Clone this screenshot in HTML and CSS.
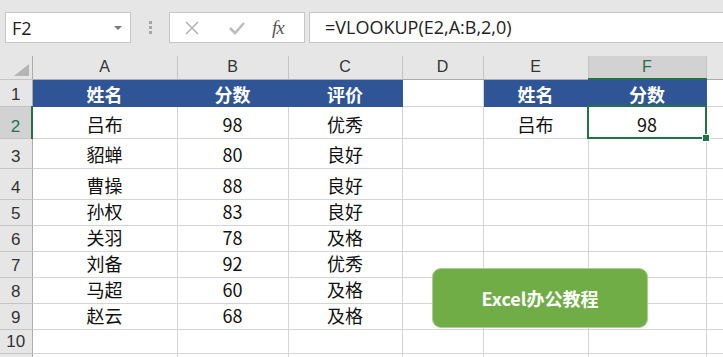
FILE: index.html
```html
<!DOCTYPE html>
<html lang="zh-CN">
<head>
    <meta charset="UTF-8">
    <title>VLOOKUP</title>
    <link rel="stylesheet" href="styles.css">
</head>
<body>
    <div class="toolbar">
        <div class="namebox">
            <span>F2</span>
            <span class="caret"></span>
        </div>
        <div class="grip"><i></i><i></i><i></i></div>
        <div class="fxbox">
            <svg width="16" height="16" viewBox="0 0 16 16"><path d="M2 2 L14 14 M14 2 L2 14" stroke="#b3b3b3" stroke-width="1.6" fill="none"/></svg>
            <svg width="18" height="16" viewBox="0 0 18 16"><path d="M2 8 L7 13 L16 3" stroke="#bdbdbd" stroke-width="2.6" fill="none"/></svg>
            <span class="fx">fx</span>
        </div>
        <div class="formula">=VLOOKUP(E2,A:B,2,0)</div>
    </div>

    <table class="sheet">
        <colgroup>
            <col class="c-row">
            <col class="c-a"><col class="c-b"><col class="c-c"><col class="c-d">
            <col class="c-e"><col class="c-f"><col>
        </colgroup>
        <tr class="r-head">
            <th class="corner"><span class="tri"></span></th>
            <th>A</th><th>B</th><th>C</th><th>D</th><th>E</th><th class="sel-col">F</th><th></th>
        </tr>
        <tr class="r1">
            <th>1</th>
            <td class="hd">姓名</td><td class="hd">分数</td><td class="hd">评价</td><td></td>
            <td class="hd">姓名</td><td class="hd">分数</td><td></td>
        </tr>
        <tr class="r2">
            <th class="sel-row">2</th>
            <td>吕布</td><td>98</td><td>优秀</td><td></td>
            <td>吕布</td><td class="active">98</td><td></td>
        </tr>
        <tr class="r3">
            <th>3</th>
            <td>貂蝉</td><td>80</td><td>良好</td><td></td><td></td><td></td><td></td>
        </tr>
        <tr class="r4">
            <th>4</th>
            <td>曹操</td><td>88</td><td>良好</td><td></td><td></td><td></td><td></td>
        </tr>
        <tr class="rn">
            <th>5</th>
            <td>孙权</td><td>83</td><td>良好</td><td></td><td></td><td></td><td></td>
        </tr>
        <tr class="rn">
            <th>6</th>
            <td>关羽</td><td>78</td><td>及格</td><td></td><td></td><td></td><td></td>
        </tr>
        <tr class="rn">
            <th>7</th>
            <td>刘备</td><td>92</td><td>优秀</td><td></td><td></td><td></td><td></td>
        </tr>
        <tr class="rn">
            <th>8</th>
            <td>马超</td><td>60</td><td>及格</td><td></td><td></td><td></td><td></td>
        </tr>
        <tr class="rn">
            <th>9</th>
            <td>赵云</td><td>68</td><td>及格</td><td></td><td></td><td></td><td></td>
        </tr>
        <tr class="r10">
            <th>10</th>
            <td></td><td></td><td></td><td></td><td></td><td></td><td></td>
        </tr>
        <tr class="r11">
            <th></th>
            <td></td><td></td><td></td><td></td><td></td><td></td><td></td>
        </tr>
    </table>

    <div class="badge">Excel办公教程</div>
</body>
</html>
```

FILE: styles.css
```css
body {
    margin: 0;
    width: 723px;
    height: 357px;
    overflow: hidden;
    background-color: #fff;
    font-family: "Noto Sans CJK SC", "Noto Sans", sans-serif;
    position: relative;
}
.toolbar {
    height: 56px;
    background-color: #e6e6e6;
    display: flex;
    align-items: flex-start;
    padding-top: 12px;
    box-sizing: border-box;
}
.namebox {
    margin-left: 5px;
    width: 126px;
    height: 31px;
    box-sizing: border-box;
    background-color: #fff;
    border: 1px solid #c6c6c6;
    display: flex;
    align-items: center;
    justify-content: space-between;
    padding: 0 8px 0 6px;
    font-family: "Open Sans", sans-serif;
    font-size: 18px;
    color: #222;
}
.caret {
    width: 0;
    height: 0;
    border-left: 4px solid transparent;
    border-right: 4px solid transparent;
    border-top: 4px solid #7b7b7b;
}
.grip {
    width: 38px;
    height: 31px;
    display: flex;
    flex-direction: column;
    align-items: center;
    justify-content: center;
    gap: 2px;
}
.grip i {
    display: block;
    width: 3px;
    height: 3px;
    background-color: #a6a6a6;
}
.fxbox {
    width: 136px;
    height: 31px;
    box-sizing: border-box;
    background-color: #fff;
    border: 1px solid #c6c6c6;
    display: flex;
    align-items: center;
    padding-left: 14px;
    gap: 28px;
}
.fx {
    font-family: "Liberation Serif", serif;
    font-style: italic;
    font-size: 19px;
    color: #555;
    letter-spacing: -1px;
    margin-left: -2px;
}
.formula {
    margin-left: 4px;
    flex: 1;
    height: 31px;
    box-sizing: border-box;
    background-color: #fff;
    border: 1px solid #c6c6c6;
    border-right: none;
    padding-left: 15px;
    line-height: 28px;
    font-family: "Open Sans", sans-serif;
    font-size: 18px;
    color: #222;
}
.sheet {
    border-collapse: collapse;
    table-layout: fixed;
    width: 740px;
}
.c-row { width: 32px; }
.c-a { width: 145px; }
.c-b { width: 111px; }
.c-c { width: 114px; }
.c-d { width: 81px; }
.c-e { width: 105px; }
.c-f { width: 118px; }
.sheet th,
.sheet td {
    padding: 0 0 3px 0;
    text-align: center;
    vertical-align: bottom;
    font-weight: normal;
    border: 1px solid #d4d4d4;
    border-top: none;
    font-size: 18px;
    color: #111;
    white-space: nowrap;
    line-height: 22px;
}
.sheet tr:first-child th {
    background-color: #e6e6e6;
    border-bottom: 1px solid #ababab;
    border-right: 1px solid #c4c4c4;
    border-left: none;
    font-family: "Liberation Sans", sans-serif;
    font-size: 16px;
    color: #333;
    padding-bottom: 0;
    vertical-align: middle;
}
.sheet tr th:first-child {
    background-color: #e6e6e6;
    border-right: 1px solid #ababab;
    border-left: none;
    border-bottom-color: #c4c4c4;
    font-family: "Liberation Sans", sans-serif;
    font-size: 17px;
    color: #333;
    padding-bottom: 0;
}
.corner {
    position: relative;
}
.tri {
    position: absolute;
    right: 3px;
    bottom: 3px;
    width: 0;
    height: 0;
    border-left: 15px solid transparent;
    border-bottom: 12px solid #b5b5b5;
}
.sheet tr th.sel-col {
    background-color: #d2d2d2;
    color: #217346;
    border-bottom: 2px solid #217346;
}
.sheet tr th.sel-row {
    background-color: #d2d2d2;
    color: #217346;
    border-right: 2px solid #217346;
}
.r-head { height: 22px; }
.r1 { height: 27px; }
.r2 { height: 32px; }
.r3 { height: 30px; }
.r4 { height: 31px; }
.rn { height: 26px; }
.r10 { height: 24px; }
.r11 { height: 20px; }
.sheet td.hd {
    background-color: #2f5597;
    border-color: #2f5597;
    color: #fff;
    font-weight: bold;
    padding-bottom: 1px;
}
.sheet td.active {
    position: relative;
    outline: 2px solid #217346;
    outline-offset: -1px;
}
.sheet td.active::after {
    content: "";
    position: absolute;
    right: -4px;
    bottom: -4px;
    width: 6px;
    height: 6px;
    background-color: #217346;
    border: 1px solid #fff;
}
.badge {
    position: absolute;
    left: 432px;
    top: 268px;
    width: 216px;
    height: 60px;
    box-sizing: border-box;
    background-color: #70ad47;
    border: 1px solid #a9d08e;
    border-radius: 9px;
    display: flex;
    align-items: center;
    justify-content: center;
    color: #fff;
    font-weight: bold;
    font-size: 18px;
}
```
